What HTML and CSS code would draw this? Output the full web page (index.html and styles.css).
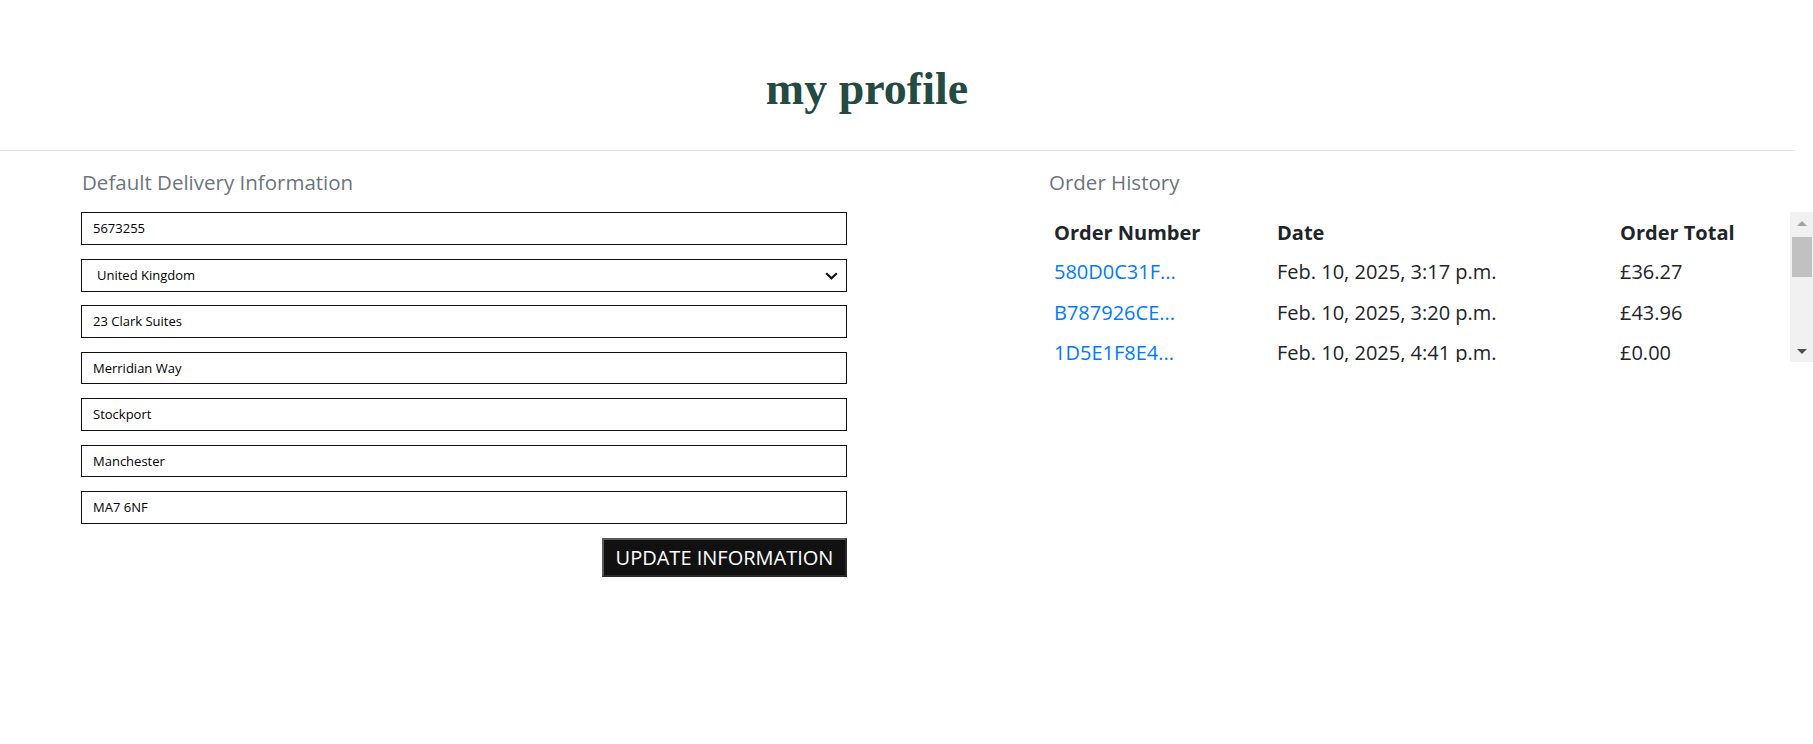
FILE: index.html
```html
<!DOCTYPE html>
<html lang="en">
<head>
<meta charset="utf-8">
<title>my profile</title>
<link rel="stylesheet" href="styles.css">
</head>
<body>
<header class="page-header">
  <h1 class="page-title">my profile</h1>
</header>
<div class="divider"></div>
<main class="profile">
  <section class="delivery">
    <h2 class="section-title">Default Delivery Information</h2>
    <form class="delivery-form">
      <input class="field" type="text" value="5673255">
      <div class="select-wrap">
        <select class="field field-select">
          <option>United Kingdom</option>
        </select>
        <svg class="chevron" width="13" height="8" viewBox="0 0 13 8"><path d="M1.2 1.3 L6.5 6.3 L11.8 1.3" fill="none" stroke="#111" stroke-width="2.2"/></svg>
      </div>
      <input class="field" type="text" value="23 Clark Suites">
      <input class="field" type="text" value="Merridian Way">
      <input class="field" type="text" value="Stockport">
      <input class="field" type="text" value="Manchester">
      <input class="field" type="text" value="MA7 6NF">
      <button class="update-btn" type="button">UPDATE INFORMATION</button>
    </form>
  </section>
  <section class="history">
    <h2 class="section-title">Order History</h2>
    <div class="orders">
      <div class="orders-scroll">
        <table class="orders-table">
          <colgroup><col class="c1"><col class="c2"><col class="c3"></colgroup>
          <thead>
            <tr><th>Order Number</th><th>Date</th><th>Order Total</th></tr>
          </thead>
          <tbody>
            <tr><td><a href="#">580D0C31F...</a></td><td>Feb. 10, 2025, 3:17 p.m.</td><td>£36.27</td></tr>
            <tr><td><a href="#">B787926CE...</a></td><td>Feb. 10, 2025, 3:20 p.m.</td><td>£43.96</td></tr>
            <tr><td><a href="#">1D5E1F8E4...</a></td><td>Feb. 10, 2025, 4:41 p.m.</td><td>£0.00</td></tr>
          </tbody>
        </table>
      </div>
      <div class="scrollbar">
        <div class="sb-btn"><span class="arrow-up"></span></div>
        <div class="sb-track"><div class="sb-thumb"></div></div>
        <div class="sb-btn"><span class="arrow-down"></span></div>
      </div>
    </div>
  </section>
</main>
</body>
</html>
```

FILE: styles.css
```css
* { box-sizing: border-box; }

html, body {
  margin: 0;
  padding: 0;
  background: #fff;
}

body {
  width: 1813px;
  font-family: "Open Sans", "Noto Sans", sans-serif;
  color: #212529;
}

.page-header {
  height: 150px;
  padding: 63px 79px 0 0;
  text-align: center;
}

.page-title {
  margin: 0;
  font-family: "Liberation Serif", serif;
  font-weight: bold;
  font-size: 46px;
  line-height: 52px;
  color: #234a43;
}

.divider {
  width: 1795px;
  height: 1px;
  background: #e3e3e3;
}

.profile {
  display: flex;
  padding: 18px 0 0 81px;
}

.delivery {
  width: 766px;
  flex: none;
}

.history {
  margin-left: 202px;
  flex: 1;
}

.section-title {
  margin: 0 0 17px 1px;
  font-size: 20.5px;
  line-height: 26px;
  font-weight: normal;
  color: #6c757d;
}

.history .section-title {
  margin-left: 0;
}

.delivery-form {
  display: flex;
  flex-direction: column;
  gap: 14px;
}

.field {
  display: block;
  width: 100%;
  height: 32.5px;
  margin: 0;
  padding: 0 0 0 11px;
  border: 1px solid #111;
  border-radius: 0;
  background: #fff;
  font-family: "Open Sans", sans-serif;
  font-size: 13px;
  color: #000;
  outline: none;
}

.select-wrap {
  position: relative;
}

.field-select {
  appearance: none;
  -webkit-appearance: none;
  height: 33.5px;
  padding-left: 15px;
  margin-bottom: -1px;
}

.chevron {
  position: absolute;
  right: 9px;
  top: 13px;
}

.update-btn {
  align-self: flex-end;
  height: 39px;
  width: 245px;
  margin: 0;
  padding: 0;
  background: #111;
  border: 2px solid;
  border-color: #5a5a5a #2a2a2a #2a2a2a #5a5a5a;
  color: #fff;
  font-family: "Open Sans", sans-serif;
  font-size: 20px;
  line-height: 35px;
}

.orders {
  display: flex;
  height: 150px;
}

.orders-scroll {
  flex: 1;
  overflow: hidden;
}

.orders-table {
  width: 741px;
  table-layout: fixed;
  border-collapse: collapse;
  font-size: 20px;
  line-height: 30px;
}

.c1 { width: 223px; }
.c2 { width: 343px; }
.c3 { width: 175px; }

.orders-table th {
  text-align: left;
  font-weight: bold;
  padding: 6px 5px 4px;
  color: #212529;
  white-space: nowrap;
}

.orders-table td {
  padding: 5.25px 5px;
  white-space: nowrap;
  color: #212529;
}

.orders-table a {
  color: #007bff;
  text-decoration: none;
}

.scrollbar {
  width: 23px;
  flex: none;
  display: flex;
  flex-direction: column;
  background: #f1f1f1;
}

.sb-btn {
  height: 22px;
  display: flex;
  align-items: center;
  justify-content: center;
}

.sb-track {
  flex: 1;
  padding: 3px 1px 0 2px;
}

.sb-thumb {
  height: 40px;
  background: #c1c1c1;
}

.arrow-up {
  width: 0;
  height: 0;
  border-left: 5px solid transparent;
  border-right: 5px solid transparent;
  border-bottom: 5px solid #a3a3a3;
}

.arrow-down {
  width: 0;
  height: 0;
  border-left: 5px solid transparent;
  border-right: 5px solid transparent;
  border-top: 5px solid #505050;
}
```
